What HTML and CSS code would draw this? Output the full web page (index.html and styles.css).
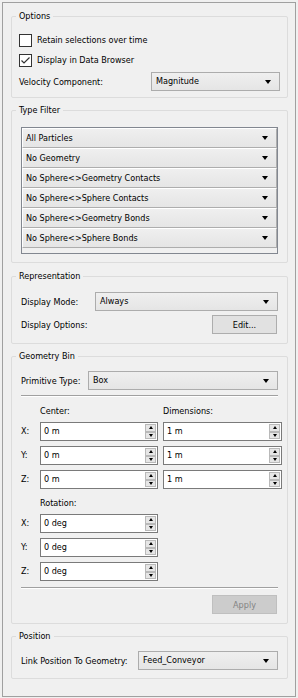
FILE: index.html
```html
<!DOCTYPE html>
<html lang="en">
<head>
    <meta charset="UTF-8">
    <meta name="viewport" content="width=device-width, initial-scale=1.0">
    <title>Particle Display</title>
    <link rel="stylesheet" href="styles.css">
</head>
<body>
<div class="panel">

    <!-- Options -->
    <fieldset class="group options">
        <legend>Options</legend>
        <label class="check"><span class="box"></span>Retain selections over time</label>
        <label class="check"><span class="box"><svg width="11" height="11" viewBox="0 0 11 11"><polyline points="1.5,5.5 4,8 9.5,2.5" fill="none" stroke="#333" stroke-width="1.2"/></svg></span>Display in Data Browser</label>
        <div class="row vel-row">
            <span class="lbl lbl-vel">Velocity Component:</span>
            <div class="combo">Magnitude</div>
        </div>
    </fieldset>

    <!-- Type Filter -->
    <fieldset class="group filter">
        <legend>Type Filter</legend>
        <div class="filter-list">
            <div class="combo cell">All Particles</div>
            <div class="combo cell">No Geometry</div>
            <div class="combo cell">No Sphere&lt;&gt;Geometry Contacts</div>
            <div class="combo cell">No Sphere&lt;&gt;Sphere Contacts</div>
            <div class="combo cell">No Sphere&lt;&gt;Geometry Bonds</div>
            <div class="combo cell">No Sphere&lt;&gt;Sphere Bonds</div>
        </div>
    </fieldset>

    <!-- Representation -->
    <fieldset class="group repr">
        <legend>Representation</legend>
        <div class="row">
            <span class="lbl lbl-disp">Display Mode:</span>
            <div class="combo">Always</div>
        </div>
        <div class="row edit-row">
            <span class="lbl">Display Options:</span>
            <button class="btn">Edit...</button>
        </div>
    </fieldset>

    <!-- Geometry Bin -->
    <fieldset class="group geom">
        <legend>Geometry Bin</legend>
        <div class="row">
            <span class="lbl lbl-prim">Primitive Type:</span>
            <div class="combo">Box</div>
        </div>
        <div class="sep"></div>

        <div class="spin-grid center-grid">
            <span></span><span class="head">Center:</span><span class="head">Dimensions:</span>
            <span class="axis">X:</span>
            <div class="spin"><span class="val">0 m</span><span class="btns"><i class="up"></i><i class="down"></i></span></div>
            <div class="spin"><span class="val">1 m</span><span class="btns"><i class="up"></i><i class="down"></i></span></div>
            <span class="axis">Y:</span>
            <div class="spin"><span class="val">0 m</span><span class="btns"><i class="up"></i><i class="down"></i></span></div>
            <div class="spin"><span class="val">1 m</span><span class="btns"><i class="up"></i><i class="down"></i></span></div>
            <span class="axis">Z:</span>
            <div class="spin"><span class="val">0 m</span><span class="btns"><i class="up"></i><i class="down"></i></span></div>
            <div class="spin"><span class="val">1 m</span><span class="btns"><i class="up"></i><i class="down"></i></span></div>
        </div>

        <div class="spin-grid rot-grid">
            <span></span><span class="head">Rotation:</span><span></span>
            <span class="axis">X:</span>
            <div class="spin"><span class="val">0 deg</span><span class="btns"><i class="up"></i><i class="down"></i></span></div>
            <span></span>
            <span class="axis">Y:</span>
            <div class="spin"><span class="val">0 deg</span><span class="btns"><i class="up"></i><i class="down"></i></span></div>
            <span></span>
            <span class="axis">Z:</span>
            <div class="spin"><span class="val">0 deg</span><span class="btns"><i class="up"></i><i class="down"></i></span></div>
            <span></span>
        </div>

        <div class="sep sep-bottom"></div>
        <div class="row apply-row">
            <button class="btn" disabled>Apply</button>
        </div>
    </fieldset>

    <!-- Position -->
    <fieldset class="group pos">
        <legend>Position</legend>
        <div class="row">
            <span class="lbl lbl-link">Link Position To Geometry:</span>
            <div class="combo">Feed_Conveyor</div>
        </div>
    </fieldset>

</div>
</body>
</html>
```

FILE: styles.css
```css
body {
    margin: 0;
    background: #f0f0f0;
    font-family: "DejaVu Sans Condensed", "DejaVu Sans", sans-serif;
    font-size: 9px;
    color: #000;
}
.panel {
    margin: 2px;
    border: 1px solid #a0a0a0;
    padding: 7px 7px 17px 8px;
}
.group {
    margin: 7px 0 0;
    border: 1px solid #dcdcdc;
    border-radius: 2px;
    padding: 7px 9px 8px 9px;
    min-width: 0;
}
.group legend {
    padding: 0 3px;
    margin-left: -5px;
    line-height: 13px;
}
.options {
    margin-top: 0;
    padding: 7px 7px 6px 7px;
}
.options legend {
    margin-left: -3px;
}
.filter {
    margin-top: 6px;
    padding-top: 10px;
    padding-bottom: 8px;
}
.check {
    display: flex;
    align-items: center;
    height: 20px;
}
.box {
    width: 11px;
    height: 11px;
    border: 1px solid #333;
    background: #fff;
    margin-right: 5px;
    display: flex;
}
.row {
    display: flex;
    align-items: center;
    height: 19px;
}
.vel-row {
    margin-top: 2px;
}
.lbl-vel { width: 132px; }
.lbl-disp { width: 74px; }
.lbl-prim { width: 67px; }
.lbl-link { width: 117px; white-space: nowrap; }
.row .combo {
    flex: 1;
}
.combo {
    position: relative;
    height: 19px;
    box-sizing: border-box;
    border: 1px solid #acacac;
    background: linear-gradient(#efefef, #e5e5e5);
    padding-left: 4px;
    line-height: 17px;
    white-space: nowrap;
}
.combo::after {
    content: "";
    position: absolute;
    right: 8px;
    top: 7px;
    border-top: 4px solid #000;
    border-left: 3px solid transparent;
    border-right: 3px solid transparent;
}

/* type filter list */
.filter-list {
    height: 127px;
    box-sizing: border-box;
    border: 1px solid #828790;
    background: #f0f0f0;
}
.cell {
    height: 20px;
    line-height: 18px;
    padding-left: 3px;
    border-color: #fff #adadad #adadad #fff;
}

.repr {
    padding-top: 9px;
    padding-bottom: 9px;
}
.edit-row {
    margin-top: 4px;
    justify-content: space-between;
}
.btn {
    width: 65px;
    height: 19px;
    margin-right: 1px;
    border: 1px solid #adadad;
    background: #e1e1e1;
    font: inherit;
    color: #000;
    padding: 0;
}
.btn:disabled {
    background: #cccccc;
    border-color: #bfbfbf;
    color: #838383;
}

.geom {
    margin-top: 6px;
    padding-top: 8px;
    padding-bottom: 9px;
}
.sep {
    margin-top: 5px;
    border-top: 1px solid #a0a0a0;
    border-bottom: 1px solid #fff;
}
.spin-grid {
    display: grid;
    grid-template-columns: 14px 118px 119px;
    column-gap: 5px;
    row-gap: 5px;
    align-items: center;
}
.center-grid {
    margin-top: 8px;
}
.rot-grid {
    margin-top: 8px;
}
.head {
    line-height: 12px;
}
.axis {
    line-height: 19px;
}
.spin {
    display: flex;
    height: 19px;
    box-sizing: border-box;
    border: 1px solid #7a7a7a;
    background: #fff;
}
.spin .val {
    flex: 1;
    padding-left: 3px;
    line-height: 17px;
}
.btns {
    width: 11px;
    display: flex;
    flex-direction: column;
    padding: 1px;
}
.btns i {
    flex: 1;
    background: #e6e6e6;
    border: 1px solid #b9b9b9;
    display: flex;
    align-items: center;
    justify-content: center;
}
.btns .up::before {
    content: "";
    border-bottom: 3px solid #000;
    border-left: 2.5px solid transparent;
    border-right: 2.5px solid transparent;
}
.btns .down::before {
    content: "";
    border-top: 3px solid #000;
    border-left: 2.5px solid transparent;
    border-right: 2.5px solid transparent;
}
.sep-bottom {
    margin-top: 6px;
}
.apply-row {
    margin-top: 6px;
    justify-content: flex-end;
}

.pos {
    margin-top: 6px;
    padding-top: 8px;
    padding-bottom: 8px;
}
```
